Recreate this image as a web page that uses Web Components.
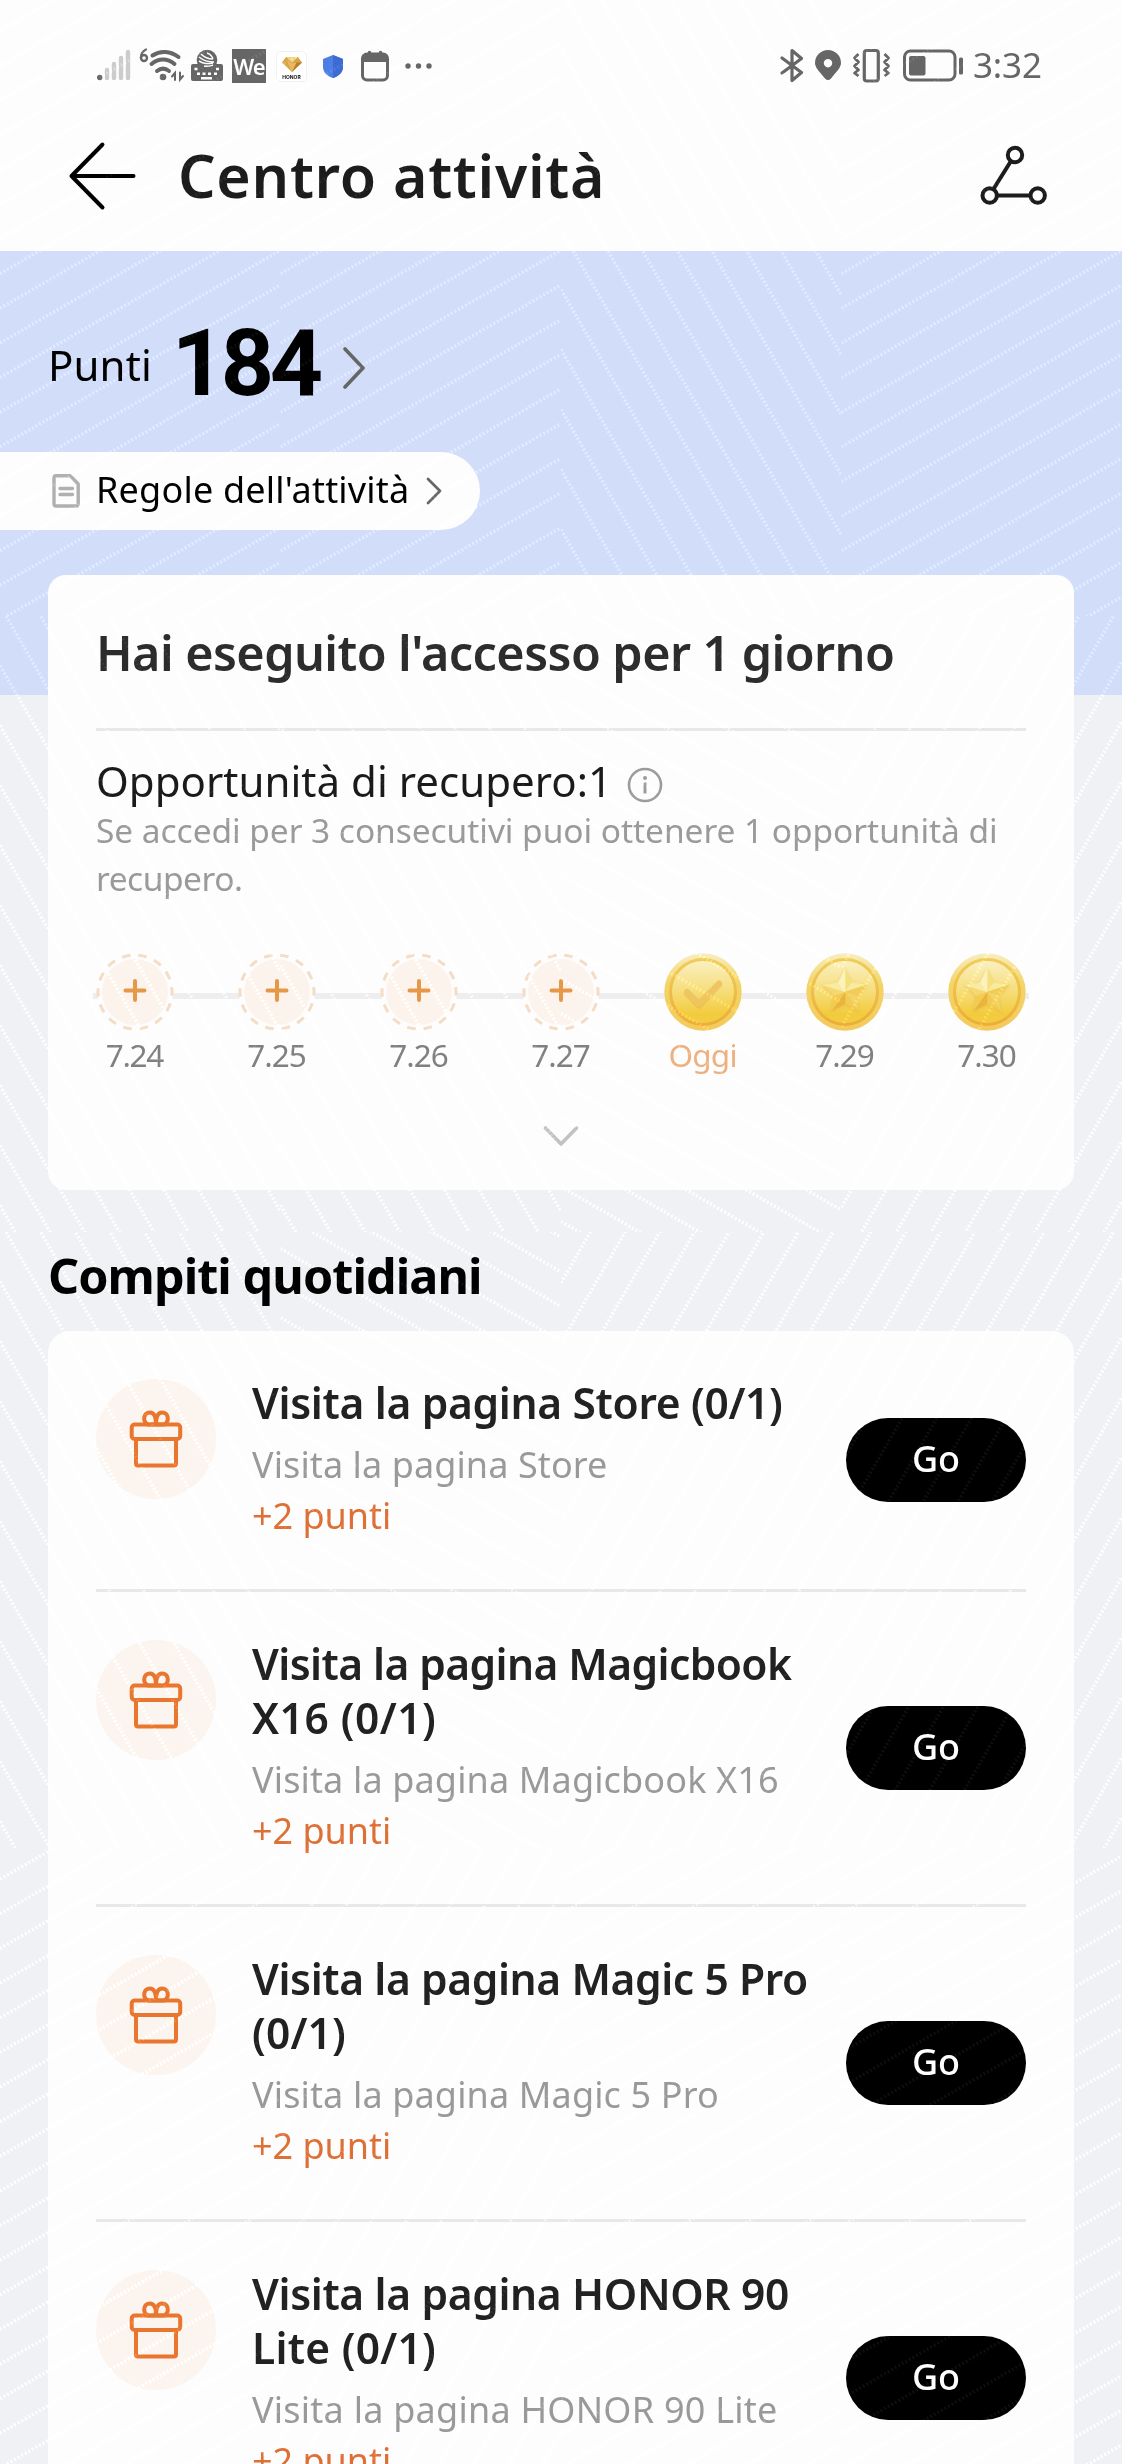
<!DOCTYPE html>
<html lang="it">
<head>
<meta charset="utf-8">
<title>Centro attività</title>
<style>
html,body{margin:0;padding:0}
body{width:1122px;height:2464px;overflow:hidden;background:#eff1f4;font-family:"Noto Sans","Open Sans",sans-serif;color:#000}
</style>
</head>
<body>
<activity-page></activity-page>
<script>
const define=(name,html,setup)=>customElements.define(name,class extends HTMLElement{
  constructor(){
    super();
    const t=document.createElement('template');
    t.innerHTML=html;
    this.attachShadow({mode:'open'}).append(t.content.cloneNode(true));
  }
  connectedCallback(){ if(setup) setup(this,this.shadowRoot); }
});

/* Single line of text: size, weight, line height and the drawn width. */
const ctx=document.createElement('canvas').getContext('2d');
define('ui-text','<style>:host{display:block;white-space:nowrap}</style><slot></slot>',(el,root)=>{
  const size=+el.getAttribute('size'), weight=el.getAttribute('weight')||400;
  const family=el.getAttribute('family')||'Noto Sans';
  el.style.fontFamily=`"${family}", sans-serif`;
  el.style.fontSize=size+'px';
  el.style.fontWeight=weight;
  el.style.lineHeight=(el.getAttribute('lh')||Math.round(size*1.2))+'px';
  const w=+el.getAttribute('w');
  const fit=()=>{
    const s=root.querySelector('slot').assignedNodes({flatten:true}).map(n=>n.textContent).join('').trim();
    if(!w||s.length<2) return;
    ctx.font=`${weight} ${size}px "${family}"`;
    const m=ctx.measureText(s), ink=m.actualBoundingBoxRight+m.actualBoundingBoxLeft;
    const ls=(w-ink)/(s.length-1);
    el.style.letterSpacing=ls.toFixed(3)+'px';
    el.style.marginRight=(-ls).toFixed(3)+'px';
  };
  fit();
  root.querySelector('slot').addEventListener('slotchange',fit);
});

define('status-bar',`<style>
:host{display:flex;height:132px;align-items:center;justify-content:space-between;padding:0 80px 0 97px;box-sizing:border-box;color:#666}
div{display:flex;align-items:center}
svg{display:block;overflow:visible}
.we{width:34px;height:34px;background:#666;color:#fdfdfd;font:600 22px/34px "Noto Sans";margin-left:9px;text-align:center;letter-spacing:-1px}
.honor{width:31px;height:31px;box-sizing:border-box;border:1px solid #f1f1f1;border-radius:5px;background:#fff;margin-left:10px;display:flex;flex-direction:column;align-items:center;padding-top:5px}
.honor b{font:700 5px/6px Inter,sans-serif;color:#111;margin-top:2px}
</style>
<div>
<svg width="34" height="34" viewBox="97 49 34 34" fill="none" stroke-width="4.400" stroke-linecap="round"><circle cx="99.700" cy="77.500" r="2.700" fill="#666"/><path stroke="#ccc" d="M107 70v8M114 64v14M121 58v20M128 52v26"/></svg>
<svg style="margin-left:8px" width="45" height="34" viewBox="139 49 45 34" fill="none" stroke="#666" stroke-width="4" stroke-linecap="round"><path stroke-width="2.400" d="M146 49.500c-4 2-5 5-5 8"/><circle cx="144" cy="58" r="3" stroke-width="2.400"/><path d="M152.500 55.500c8-5.500 18-4.500 26 1.500M151.500 64c7-6 16-6 23 0M157 71c4-3.200 8-3.200 12 0"/><circle cx="163" cy="77" r="3.300" fill="#666" stroke="none"/><path stroke-width="2" d="M175 80v-7l-3 3.500M180 72.500v7l3-3.500"/></svg>
<svg style="margin-left:7px" width="32" height="34" viewBox="191 49 32 34"><path fill="#666" d="M193 64h5a10 10 0 0 0 18 0h5q2 0 2 2v13q0 2-2 2h-28q-2 0-2-2V66q0-2 2-2z"/><circle cx="207" cy="60" r="10.300" fill="#666"/><path stroke="#fdfdfd" stroke-width="1.500" fill="none" d="M201 54c4 4 7 5 12 5M199 57c5 4 9 5 15 5M199 61c5 3 8 3 14 2M204 66c4 1 6 0 9-1M207 53c3 1 5 3 6 6"/><path stroke="#fdfdfd" stroke-width="2.600" d="M194.500 69h3M216 69h3M197 73.700h3M202.500 73.700h3M208 73.700h3M214 73.700h3M201 78.300h11"/></svg>
<span class="we">We</span>
<span class="honor"><svg width="20" height="15" viewBox="0 0 20 15"><path fill="#d9a448" d="M4 0h12l4 5.500L10 15 0 5.500z"/><path fill="#f3d08a" d="M4 0h12l-6 5.500z"/><path fill="#b87d28" d="M20 5.500L10 15V5.500z"/><path fill="#e8b860" d="M5.500 5.500h9L10 15z"/></svg><b>HONOR</b></span>
<svg style="margin-left:16px" width="20" height="23" viewBox="0 0 20 23"><path fill="#4b7fe3" d="M10 0l10 4v8c0 5-4 9-10 11C4 21 0 17 0 12V4z"/><path fill="#3d6bd2" d="M10 0l10 4v8c0 5-4 9-10 11z"/></svg>
<svg style="margin-left:18px" width="28" height="32" viewBox="0 0 28 32"><rect x="1.500" y="4" width="25" height="26" rx="4.500" fill="none" stroke="#666" stroke-width="3"/><path fill="#666" d="M2 5q1-2 4-2h16q3 0 4 2v7H2z"/><path stroke="#666" stroke-width="3.500" stroke-linecap="round" d="M8.500 2.500v3M19.500 2.500v3"/></svg>
<svg style="margin-left:16px" width="28" height="6" viewBox="0 0 28 6" fill="#666"><circle cx="3" cy="3" r="2.700"/><circle cx="13.500" cy="3" r="2.700"/><circle cx="24" cy="3" r="2.700"/></svg>
</div>
<div>
<svg width="22" height="34" viewBox="780 49 22 34" fill="none" stroke="#666" stroke-width="3.200" stroke-linejoin="round" stroke-linecap="round"><path d="M781 58l19.500 14.500L791 80.500V50.500l9.500 8L781 73"/></svg>
<svg style="margin-left:12px" width="26" height="34" viewBox="814 49 26 34"><path fill="#666" fill-rule="evenodd" d="M827 50a13 13 0 0 1 13 13c0 5-5 9-10 15.500q-3 3-6 0C819 72 814 68 814 63a13 13 0 0 1 13-13zm0 9a4.200 4.200 0 1 0 .01 0z"/></svg>
<svg style="margin-left:12px" width="37" height="34" viewBox="852 49 37 34" fill="none" stroke="#666" stroke-width="3.200"><rect x="863.300" y="50.500" width="14" height="30.500" rx="2.500"/><path stroke-width="2.800" stroke-linejoin="round" d="M857.500 54l-4 4 4 4-4 4 4 4-4 3 4 3M883.500 54l4 4-4 4 4 4-4 4 4 3-4 3"/></svg>
<svg style="margin-left:13px" width="60" height="34" viewBox="902 49 60 34"><rect x="903.500" y="51" width="50.500" height="29" rx="6" fill="none" stroke="#666" stroke-width="3"/><rect x="908" y="56" width="16.500" height="19.500" rx="2" fill="#666"/><rect x="958" y="57.500" width="4" height="17" rx="1.500" fill="#666"/></svg>
<ui-text size="35" lh="40" w="67" style="margin-top:-3px;padding-left:10px">3:32</ui-text>
</div>`);

define('nav-bar',`<style>
:host{display:flex;height:119px;box-sizing:border-box;padding:0 74px 31px 67px;align-items:center;color:#1c1c1c}
svg{display:block;overflow:visible}
.share{margin-left:auto}
</style>
<svg width="70" height="70" viewBox="67 141 70 70" fill="none" stroke="#000" stroke-width="4" stroke-linecap="round" stroke-linejoin="round"><path d="M133.500 176H71.500M102.500 144.500L71.500 176l31 31.500"/></svg>
<ui-text size="59" weight="600" lh="86" w="420" style="padding:0 0 2px 41px"><slot></slot></ui-text>
<svg class="share" width="67" height="60" viewBox="981 146 67 60" fill="none" stroke="#1c1c1c" stroke-width="4"><circle cx="1015" cy="155" r="7.200"/><circle cx="989.700" cy="195.500" r="7.200"/><circle cx="1037.700" cy="195.500" r="7.200"/><path d="M1011 161l-17.500 28M997 195.500h33.500"/></svg>`);

define('points-row',`<style>
:host{display:flex;height:201px;box-sizing:border-box;padding:27px 0 0 48px;align-items:center}
svg{margin:5px 0 0 20px}
</style>
<ui-text size="42" lh="50" w="97">Punti</ui-text>
<ui-text size="93" weight="700" family="Roboto" lh="100" w="142" style="padding:0 0 3px 20px"><slot></slot></ui-text>
<svg width="22" height="42" viewBox="0 0 22 42" fill="none" stroke="#666" stroke-width="3.600" stroke-linecap="round" stroke-linejoin="round"><path d="M2 2l18 19L2 40"/></svg>`);

define('rules-pill',`<style>
:host{display:flex;width:480px;height:78px;box-sizing:border-box;padding-left:52px;align-items:center;background:#fdfdfd;border-radius:0 39px 39px 0}
</style>
<svg width="28" height="34" viewBox="0 0 28 34" fill="none" stroke="#b0b0b0" stroke-width="3.400" stroke-linejoin="round"><path d="M4 1.800h14.500L26.200 10v20q0 2-2 2H4q-2 0-2-2V4q0-2.200 2-2.200z"/><path stroke-linecap="round" d="M8 14.500h12.500M8 20.500h12.500"/></svg>
<ui-text size="36" lh="44" w="308" style="padding:0 0 3px 16px"><slot></slot></ui-text>
<svg style="margin-left:17px" width="16" height="28" viewBox="0 0 16 28" fill="none" stroke="#666" stroke-width="2.800" stroke-linecap="round" stroke-linejoin="round"><path d="M2 2l12 12L2 26"/></svg>`);

define('day-coin',`<style>
:host{display:flex;flex-direction:column;align-items:center;width:78px;color:#808080}
:host([kind=today]){color:#eeb07e}
svg{display:block;margin-bottom:4px}
</style><div class="art"></div><div class="label"></div>`,(el,root)=>{
  const kind=el.getAttribute('kind');
  root.querySelector('.label').innerHTML=`<ui-text size="31.500" lh="40" w="${kind==='today'?66:57.5}">${el.getAttribute('label')}</ui-text>`;
  const coin=`<defs><linearGradient id="r" x2="0" y2="1"><stop stop-color="#f8edbf"/><stop offset=".4" stop-color="#f3d465"/><stop offset="1" stop-color="#f4c95c"/></linearGradient>
  <linearGradient id="i" x2="0" y2="1"><stop stop-color="#fbf0c5"/><stop offset=".45" stop-color="#f6df80"/><stop offset=".85" stop-color="#f2cb3c"/><stop offset="1" stop-color="#f3cc4a"/></linearGradient>
  <linearGradient id="e" x2="0" y2="1"><stop stop-color="#efcd5a"/><stop offset="1" stop-color="#ecae35"/></linearGradient></defs>
  <circle cx="39" cy="39" r="38.700" fill="url(#r)"/><circle cx="39" cy="39" r="32.500" fill="url(#i)" stroke="url(#e)" stroke-width="3"/>`;
  const star=()=>{
    const p=(r,a)=>[39+r*Math.sin(a),39-r*Math.cos(a)].map(v=>v.toFixed(1)).join(' ');
    const tone=['#f5e07c','#f8eba0','#f0cc58','#f3d468','#f1cc54','#eab43e','#f2cc52','#f5d870','#f8eba4','#fbf2bc'];
    let s='';
    for(let k=0;k<10;k++){
      const a=k*Math.PI/5, o=k%2?11.5:23, n=k%2?23:11.5;
      s+=`<path fill="${tone[k]}" stroke="${tone[k]}" stroke-width=".6" stroke-linejoin="round" d="M39 39L${p(o,a)}L${p(n,a+Math.PI/5)}z"/>`;
    }
    return `<g style="filter:drop-shadow(0 1px 1.500px #d9982066)">${s}</g>`;
  };
  const art={
    missed:`<circle cx="39" cy="39" r="38" fill="#fdfdfd"/><circle cx="39" cy="39" r="33" fill="#fcf3ed"/><circle cx="39" cy="39" r="37" fill="none" stroke="#f5dcc5" stroke-width="3" stroke-dasharray="8.600 8" transform="rotate(-85 39 39)"/><path stroke="#e69849" stroke-width="4" stroke-linecap="round" d="M39 28v19M29.500 37.500h19"/>`,
    today:coin+`<path fill="none" stroke="#dfa13e" stroke-opacity=".3" stroke-width="6.500" stroke-linejoin="round" stroke-linecap="round" d="M23 40.500L35 52.500 55 32"/><path fill="none" stroke="#efc560" stroke-width="6" stroke-linejoin="round" stroke-linecap="round" d="M23 39L35 50.500 55 30.500"/>`,
    next:coin+star()
  };
  root.querySelector('.art').innerHTML=`<svg width="78" height="78" viewBox="0 0 78 78">${art[kind]}</svg>`;
});

define('checkin-card',`<style>
:host{display:block;margin:45px 48px 0;height:615px;box-sizing:border-box;padding:0 48px;background:#fdfdfd;border-radius:18px}
hr{border:0;height:3px;background:#e8e8e8;margin:0}
.opp{display:flex;align-items:center;padding-top:25px;color:#1a1a1a}
.note{color:#9a9a9a}
.days{display:flex;justify-content:space-between;margin:51px -3px 0;padding:0 3px;background:linear-gradient(#eee,#eee) 0 40px/100% 6px no-repeat}
.more{display:block;margin:51px auto 0}
</style>
<ui-text size="48.500" weight="600" lh="151" w="793" style="color:#2c2c2c;padding-top:2px">Hai eseguito l'accesso per 1 giorno</ui-text>
<hr>
<div class="opp"><ui-text size="42" lh="50" w="505">Opportunità di recupero:1</ui-text>
<svg style="margin:7px 0 0 15px" width="36" height="36" viewBox="0 0 36 36" fill="none" stroke="#9c9c9c" stroke-width="2.600"><circle cx="18" cy="18" r="16"/><path stroke-width="3" d="M18 15.500v11"/><circle cx="18" cy="11" r="2" fill="#9c9c9c" stroke="none"/></svg></div>
<div class="note"><ui-text size="33.500" lh="48" w="899">Se accedi per 3 consecutivi puoi ottenere 1 opportunità di</ui-text><ui-text size="33.500" lh="48" w="143">recupero.</ui-text></div>
<div class="days"><slot></slot></div>
<svg class="more" width="36" height="21" viewBox="0 0 36 21" fill="none" stroke="#c2c2c2" stroke-width="3.600" stroke-linecap="round" stroke-linejoin="round"><path d="M2.500 2L18 18 33.500 2"/></svg>`);

define('task-item',`<style>
:host{display:flex;gap:36px;padding:48px 0;border-top:3px solid #e8e8e8}
:host(:first-child){border-top:0}
.icon{flex:none;width:120px;height:120px;border-radius:50%;background:#fcf4ef;display:flex;align-items:center;justify-content:center}
.body{flex:1}
.title{margin:-3px 0 9px;color:#212121}
.sub{color:#999}
.pts{color:#dd7037}
button{flex:none;align-self:center;width:180px;height:84px;border:0;border-radius:42px;background:#000;color:#fff;font-family:inherit;padding:0 0 2px;display:flex;align-items:center;justify-content:center}
</style>
<div class="icon"><svg width="56" height="60" viewBox="0 0 56 60" fill="none" stroke="#e8762f" stroke-width="4" stroke-linejoin="round"><rect x="3.700" y="15.500" width="48.500" height="14.500" rx="3"/><path d="M8 30v24.500q0 2 2 2h36q2 0 2-2V30"/><path d="M28 15.500h-8c-6-3-4.500-12 2-12 4.500 0 6 6 6 12zM28 15.500h8c6-3 4.500-12-2-12-4.500 0-6 6-6 12z"/></svg></div>
<div class="body"><div class="title"></div><div class="sub"></div><div class="pts"><ui-text size="36" lh="51" w="136">+2 punti</ui-text></div></div>
<button><ui-text size="36" weight="500" lh="44" w="45">Go</ui-text></button>`,(el,root)=>{
  const fill=(sel,str,wid,attrs)=>{
    const ws=wid.split(',');
    root.querySelector(sel).innerHTML=str.split('|').map((t,i)=>`<ui-text ${attrs} w="${ws[i]}">${t}</ui-text>`).join('');
  };
  fill('.title',el.getAttribute('heading'),el.getAttribute('hw'),'size="42.500" weight="600" lh="54"');
  fill('.sub',el.getAttribute('detail'),el.getAttribute('dw'),'size="36" lh="51"');
});

define('task-list',`<style>
:host{display:block}
.card{margin:0 48px;padding:0 48px;background:#fdfdfd;border-radius:22px 22px 0 0}
</style>
<ui-text size="48.500" weight="700" lh="111" w="430" style="padding:30px 0 0 48px">Compiti quotidiani</ui-text>
<div class="card"><slot></slot></div>`);

/* Dotted hatch that brightens whatever lies under it, in a 4 x 4 tile grid. */
define('hatch-overlay',`<style>
:host{position:absolute;inset:0;width:1122px;height:2464px;pointer-events:none;mix-blend-mode:plus-lighter}
svg{display:block}
</style><div></div>`,(el,root)=>{
  const W=280.5,H=616,t30=Math.tan(Math.PI/6),t60=Math.tan(Math.PI/3);
  const kinds={a:[-t30,31.2,34.64],b:[t60,49.5,60],c:[t30,16.5,34.64],d:[-t60,51,60]};
  const grid=['aaba','bbcd','bcdd','adaa'];
  let s='';
  grid.forEach((row,r)=>[...row].forEach((k,c)=>{
    const [m,off,step]=kinds[k];
    let d='';
    for(let i=-20;i<40;i++){
      const y=off+i*step, y2=y+m*W;
      if(Math.max(y,y2)<-5||Math.min(y,y2)>H+5) continue;
      d+=`M0 ${y.toFixed(1)}L${W} ${y2.toFixed(1)}`;
    }
    s+=`<svg x="${c*W}" y="${r*H}" width="${W}" height="${H}"><path d="${d}"/></svg>`;
  }));
  root.querySelector('div').innerHTML=`<svg width="1122" height="2464" fill="none" stroke="#0e0e0e" stroke-width="3.400" stroke-dasharray="2 2.100">${s}</svg>`;
});

define('activity-page',`<style>
:host{display:block;position:relative;width:1122px;height:2464px;overflow:hidden;isolation:isolate;background:#fdfdfd}
main{display:block;min-height:2213px;background:linear-gradient(#d2def9 444px,#eff1f4 444px)}
</style>
<status-bar></status-bar>
<nav-bar>Centro attività</nav-bar>
<main>
<points-row>184</points-row>
<rules-pill>Regole dell'attività</rules-pill>
<checkin-card>
<day-coin kind="missed" label="7.24"></day-coin><day-coin kind="missed" label="7.25"></day-coin><day-coin kind="missed" label="7.26"></day-coin><day-coin kind="missed" label="7.27"></day-coin><day-coin kind="today" label="Oggi"></day-coin><day-coin kind="next" label="7.29"></day-coin><day-coin kind="next" label="7.30"></day-coin>
</checkin-card>
<task-list>
<task-item heading="Visita la pagina Store (0/1)" hw="530" detail="Visita la pagina Store" dw="354"></task-item>
<task-item heading="Visita la pagina Magicbook|X16 (0/1)" hw="540,183" detail="Visita la pagina Magicbook X16" dw="525"></task-item>
<task-item heading="Visita la pagina Magic 5 Pro|(0/1)" hw="555,92" detail="Visita la pagina Magic 5 Pro" dw="465"></task-item>
<task-item heading="Visita la pagina HONOR 90|Lite (0/1)" hw="536,180" detail="Visita la pagina HONOR 90 Lite" dw="524"></task-item>
</task-list>
</main>
<hatch-overlay></hatch-overlay>`);
</script>
</body>
</html>
